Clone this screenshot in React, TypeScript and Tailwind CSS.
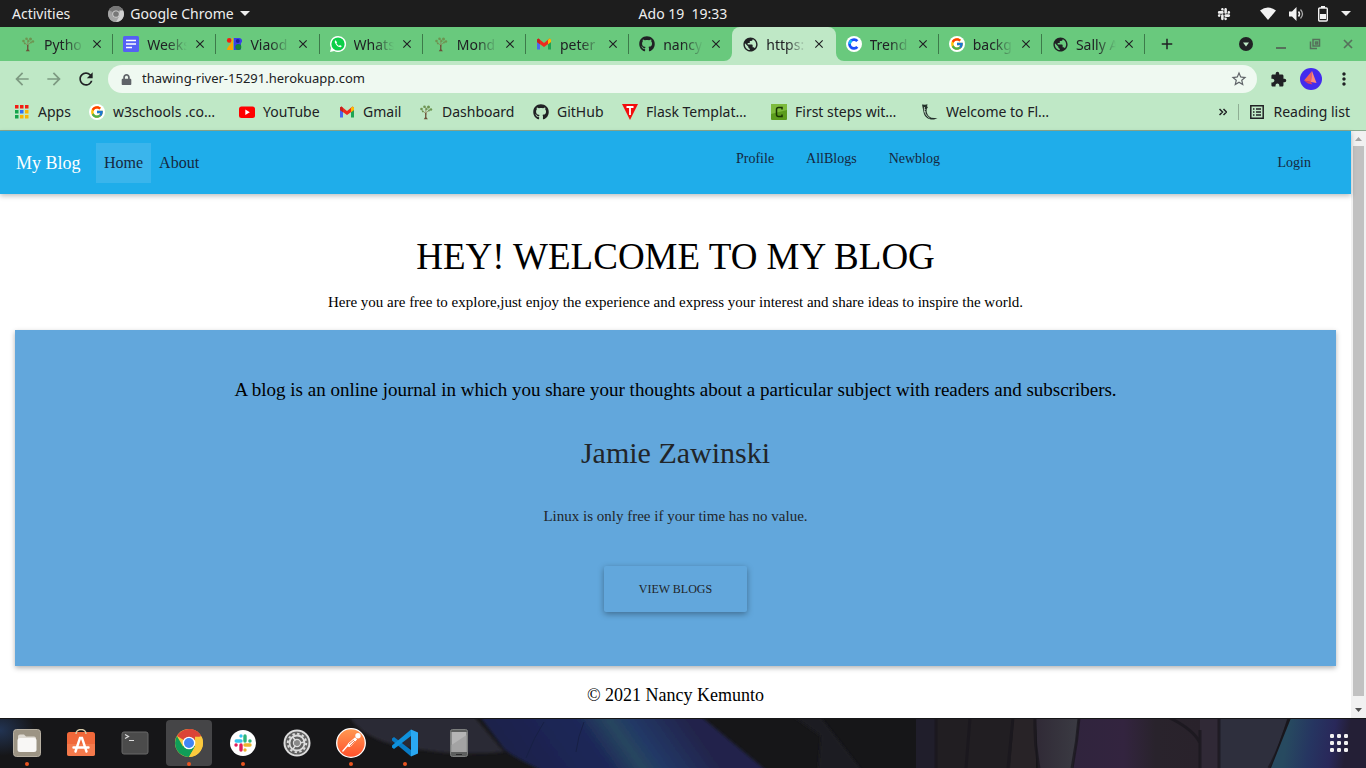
import React from "react";
import { FaGithub, FaSlack, FaLock } from "react-icons/fa";
import { FcGoogle } from "react-icons/fc";
import { MdClose, MdArrowBack, MdArrowForward, MdRefresh, MdStarBorder, MdMoreVert, MdPublic, MdAdd, MdExtension } from "react-icons/md";

const ui = "font-['Noto_Sans',sans-serif]";

function Tree() {
  return (
    <svg viewBox="0 0 16 16" className="size-4">
      <path d="M3.500 6l4 3.200 4.500-3.700M7.800 3v8" stroke="#8b7a55" strokeWidth=".7" fill="none" />
      <g fill="#6c9551">
        <circle cx="3.500" cy="5" r="1.300" /><circle cx="6.500" cy="2.800" r="1.300" /><circle cx="10.500" cy="3" r="1.500" />
        <circle cx="13" cy="5.500" r="1.200" /><circle cx="8.500" cy="5.200" r="1.100" /><circle cx="4.800" cy="7.400" r=".9" /><circle cx="11" cy="6.500" r=".9" />
      </g>
      <path d="M5.800 15.200l1.300-2V9h1.300v4.200l1.500 2z" fill="#6b5038" />
    </svg>
  );
}
function Doc() {
  return <svg viewBox="0 0 16 16" className="size-4"><rect width="16" height="16" rx="1.500" fill="#5560f5" /><path d="M3 4.500h10M3 8h10M3 11.500h6" stroke="#fff" strokeWidth="1.700" /></svg>;
}
function Viaod() {
  return (
    <svg viewBox="0 0 16 16" className="size-4">
      <circle cx="3.200" cy="4.400" r="2.300" fill="#f21b12" /><path d="M7 2v12H1c0-4 5-5 5-12z" fill="#f9a602" />
      <path d="M7.800 2H13a2.800 2.800 0 012 5v6a1.500 1.500 0 01-1.500 1H7.800z" fill="#3b3fe8" /><circle cx="12.300" cy="11" r="3" fill="#14823f" /><circle cx="11.800" cy="5" r="2" fill="#1c1f9e" />
    </svg>
  );
}
function Gmail() {
  return (
    <svg viewBox="0 0 16 16" className="size-4">
      <path d="M1 4v9.500h3V7z" fill="#4a68f0" /><path d="M12 7v6.500h3V4z" fill="#1fa553" />
      <path d="M1 3.500l1.500-1L8 7l5.500-4.500 1.500 1V6l-7 5-7-5z" fill="#ef2b1e" /><path d="M12 4l1.500-1.500 1.500 1V6l-3 2.200z" fill="#fbbc04" /><path d="M1 6V3.500l1.500-1L4 4v4.200z" fill="#c5221f" />
    </svg>
  );
}
function Globe() {
  return <MdPublic className="size-[17px] text-[#202124]" />;
}
function Google() {
  return <span className="grid size-4 place-items-center rounded-full bg-white"><FcGoogle className="size-3.5" /></span>;
}
function Clockify() {
  return <svg viewBox="0 0 16 16" className="size-4"><circle cx="8" cy="8" r="8" fill="#fff" /><path d="M11.300 5.200a4.400 4.400 0 100 5.600" stroke="#1b4dfa" strokeWidth="2.800" fill="none" /><path d="M3.600 8a4.400 4.400 0 012-3.700" stroke="#15b9f2" strokeWidth="2.800" fill="none" /></svg>;
}
function WhatsApp() {
  return <svg viewBox="0 0 16 16" className="size-4"><path d="M8 0a8 8 0 11-3.800 15L0 16l1.100-4A8 8 0 018 0z" fill="#fff" /><circle cx="8" cy="8" r="6.600" fill="#0ccf48" /><path d="M5.600 4.200c-.9.600-1 1.800-.5 2.700 1 2 2.200 3.300 4.200 4.200 1 .4 2.200 0 2.400-1.200L9.900 9l-.9.900C7.900 9.400 7 8.500 6.400 7.300l.7-.9z" fill="#fff" /></svg>;
}

const tabs = [
  { label: "Pytho", icon: <Tree /> },
  { label: "Weeks", icon: <Doc /> },
  { label: "Viaod", icon: <Viaod /> },
  { label: "Whats", icon: <WhatsApp /> },
  { label: "Mond", icon: <Tree /> },
  { label: "peter", icon: <Gmail /> },
  { label: "nancy", icon: <FaGithub className="size-4" /> },
  { label: "https:", icon: <Globe />, active: true },
  { label: "Trend", icon: <Clockify /> },
  { label: "backg", icon: <Google /> },
  { label: "Sally A", icon: <Globe /> },
];

function Apps() {
  const colors = ["#f21b12", "#f21b12", "#f21b12", "#14a34a", "#2f6df6", "#f9b402", "#14a34a", "#f9b402", "#f9b402"];
  return <svg viewBox="0 0 16 16" className="size-4">{colors.map((c, i) => <rect key={i} x={1 + (i % 3) * 5} y={1 + Math.floor(i / 3) * 5} width="3.500" height="3.500" fill={c} />)}</svg>;
}

const bookmarks = [
  { label: "Apps", icon: <Apps />, w: "w-[75px]" },
  { label: "w3schools .co…", icon: <Google />, w: "w-[150px]" },
  { label: "YouTube", icon: <svg viewBox="0 0 16 16" className="size-4"><rect y="2.500" width="16" height="11.500" rx="2.500" fill="#f00" /><path d="M6.300 5.500v5.500l4.500-2.800z" fill="#fff" /></svg>, w: "w-[100px]" },
  { label: "Gmail", icon: <Gmail />, w: "w-[79px]" },
  { label: "Dashboard", icon: <Tree />, w: "w-[115px]" },
  { label: "GitHub", icon: <FaGithub className="size-4" />, w: "w-[89px]" },
  { label: "Flask Templat…", icon: <svg viewBox="0 0 16 16" className="size-4"><path d="M0 0h16L8 16z" fill="#f20d0d" /><path d="M4.500 3h7M8 3v8" stroke="#fff" strokeWidth="1.800" /></svg>, w: "w-[149px]" },
  { label: "First steps wit…", icon: <svg viewBox="0 0 16 16" className="size-4"><rect width="16" height="16" rx="1" fill="#5a9b1c" /><path d="M0 0h16v6L0 10z" fill="#7dbb3c" /><path d="M11 5.500V3.500H7.500c-1.500 0-2 .6-2 2v5c0 1.400.5 2 2 2H11v-2" stroke="#193503" strokeWidth="1.500" fill="none" /></svg>, w: "w-[151px]" },
  { label: "Welcome to Fl…", icon: <svg viewBox="0 0 16 16" className="size-4"><path d="M0 .5l3 .3L5.500.2 5 2.500 6 3 4.800 5c-.8 3.500 1 7 4.500 8.800l6.200.4-3.500 1.300C6.500 16 2.300 13 1.500 8z" fill="#24332b" /><path d="M2.500 3c-.8 5 1.700 9 5 11M3.500 5.500l-1-.5M3.700 8l-1.200-.5" stroke="#d8efdc" strokeWidth=".8" fill="none" /></svg>, w: "w-[140px]" },
];

function ChromeIcon({ gray = false, className }: { gray?: boolean; className: string }) {
  return (
    <svg viewBox="0 0 28 28" className={className}>
      <circle cx="14" cy="14" r="14" fill={gray ? "#9a9a9a" : "#fbc93d"} />
      <path d="M14 14L1.900 7A14 14 0 0126.100 7z" fill={gray ? "#777" : "#db4437"} />
      <path d="M14 0A14 14 0 0126.100 7H14z" fill={gray ? "#777" : "#db4437"} />
      <path d="M1.900 7A14 14 0 0014 28l6.100-10.500L14 14 8 17.500z" fill={gray ? "#a4a4a4" : "#109d58"} />
      <path d="M14 28l6-10.500V7.700h6.500A14 14 0 0114 28z" fill={gray ? "#d0d0d0" : "#fbc93d"} />
      <circle cx="14" cy="14" r="6.300" fill={gray ? "#ddd" : "#fff"} /><circle cx="14" cy="14" r="5" fill={gray ? "#777" : "#4285f4"} />
    </svg>
  );
}

function SlackMark() {
  return (
    <svg viewBox="0 0 26 26" className="size-[26px]">
      <circle cx="13" cy="13" r="13" fill="#fff" />
      <g strokeWidth="3.400" strokeLinecap="round" fill="none">
        <path d="M11 6v.1M6.200 11H11" stroke="#36c5f0" /><path d="M15 6v5M20 11h-.1" stroke="#2eb67d" />
        <path d="M20 15h-5M15 20v-.1" stroke="#ecb22e" /><path d="M11 20v-5M6 15h.1" stroke="#e01e5a" />
      </g>
    </svg>
  );
}

const dock = [
  { name: "Files", running: true, icon: <svg viewBox="0 0 28 28" className="size-7"><rect x=".5" y=".5" width="27" height="27" rx="3" fill="#9c9484" stroke="#b7b0a2" /><path d="M5 7.500q0-2 2-2h4l2 2h8q2 0 2 2V12H5z" fill="#dedad2" /><rect x="4.500" y="9" width="19" height="14" rx="2.500" fill="#f8f7f5" /></svg> },
  { name: "Software", running: false, icon: <svg viewBox="0 0 28 28" className="size-7"><rect y="3" width="28" height="24" rx="2.500" fill="#f0683a" /><path d="M0 15h28v9.500a2.500 2.500 0 01-2.500 2.500h-23A2.500 2.500 0 010 24.500z" fill="#f47a4c" /><path d="M9 5c0-6 10-6 10 0" fill="none" stroke="#d8cba8" strokeWidth="1.500" /><path d="M8.500 22.500L13 9h2l4.500 13.500M6.500 18.500h15" stroke="#fff" strokeWidth="2.400" fill="none" strokeLinecap="round" /></svg> },
  { name: "Terminal", running: false, icon: <svg viewBox="0 0 28 28" className="size-7"><rect x="1" y="3" width="26" height="22" rx="2" fill="#4b4b4b" stroke="#686868" /><path d="M4 5.500l3.500 2L4 9.500M8 11.500h5" stroke="#ddd" strokeWidth="1.200" fill="none" /></svg> },
  { name: "Google Chrome", running: true, selected: true, icon: <ChromeIcon className="size-7" /> },
  { name: "Slack", running: true, icon: <SlackMark /> },
  { name: "Settings", running: false, icon: <svg viewBox="0 0 28 28" className="size-7"><circle cx="14" cy="14" r="13.500" fill="#dcdcdc" /><circle cx="14" cy="14" r="11.500" fill="#606060" /><circle cx="14" cy="14" r="7.500" fill="none" stroke="#dcdcdc" strokeWidth="1.800" /><circle cx="14" cy="14" r="9.200" fill="none" stroke="#dcdcdc" strokeWidth="2" strokeDasharray="2.400 2.400" /><circle cx="14" cy="14" r="3.600" fill="#888" stroke="#dcdcdc" strokeWidth="1.200" /><path d="M17 14l4-1M12.500 11.500L9.500 8M12.500 16.500L10 20" stroke="#dcdcdc" strokeWidth="1.500" /></svg> },
  { name: "Postman", running: true, icon: <svg viewBox="0 0 30 30" className="size-[30px]"><defs><linearGradient id="pm" x2="0" y2="1"><stop stopColor="#ff9a52" /><stop offset="1" stopColor="#ff4f2b" /></linearGradient></defs><circle cx="15" cy="15" r="14.300" fill="url(#pm)" stroke="#fff" strokeWidth="1.300" /><circle cx="22" cy="7.800" r="2.700" fill="#fff" /><path d="M19.500 10L12 17l-5.500 6.500M20.500 11L13 18.500" stroke="#fff" strokeWidth="1.300" fill="none" /><path d="M12 15.500l7-6 2 1.800-6 7-3.500.7z" fill="#fff" /><path d="M13 16l5-4M14 18l5-5" stroke="#f36b39" strokeWidth=".9" /></svg> },
  { name: "Visual Studio Code", running: true, icon: <svg viewBox="0 0 28 28" className="size-7"><path d="M1 9.500l2-1.600L20 21v6.500L1 11.500z" fill="#087bc5" /><path d="M1 18.500l2 1.600L20 7V.5L1 16.500z" fill="#0f91dc" /><path d="M20 .5l7 3v21l-7 3z" fill="#2aa8f2" /></svg> },
  { name: "Device", running: false, icon: <svg viewBox="0 0 28 28" className="size-7"><rect x="5.500" y=".5" width="17" height="27" rx="2" fill="#5d5f5e" stroke="#7c7e7d" /><rect x="6.500" y="3" width="15" height="20" fill="#b5b5b5" /><path d="M6.500 16L21.500 6v17h-15z" fill="#a3a3a3" /><path d="M11 25.500h6" stroke="#2b2b2b" /></svg> },
];

function Wallpaper() {
  return (
    <svg viewBox="0 0 1366 50" preserveAspectRatio="none" aria-hidden="true" className="absolute inset-0 size-full">
      <defs>
        <linearGradient id="beam" x1="530" y1="65" x2="665" y2="-30" gradientUnits="userSpaceOnUse">
          <stop stopColor="#1b204b" /><stop offset=".45" stopColor="#1d2858" /><stop offset=".61" stopColor="#27465f" /><stop offset=".72" stopColor="#223866" /><stop offset="1" stopColor="#20244b" />
        </linearGradient>
        <linearGradient id="edge" x1="1285" y1="30" x2="1345" y2="40" gradientUnits="userSpaceOnUse"><stop stopColor="#274a60" /><stop offset=".4" stopColor="#263561" /><stop offset=".75" stopColor="#29285a" /><stop offset="1" stopColor="#241f36" /></linearGradient>
        <linearGradient id="panel"><stop stopColor="#30243d" /><stop offset=".4" stopColor="#33243f" /><stop offset=".65" stopColor="#29232c" /><stop offset="1" stopColor="#29222b" /></linearGradient>
        <linearGradient id="pane"><stop stopColor="#302a36" /><stop offset="1" stopColor="#3b3b43" /></linearGradient>
        <radialGradient id="corner"><stop stopColor="#223453" /><stop offset="1" stopColor="#161618" /></radialGradient>
        <filter id="soft"><feGaussianBlur stdDeviation="1.500" /></filter>
      </defs>
      <rect width="1366" height="50" fill="#161618" />
      <ellipse cx="0" cy="12" rx="35" ry="26" fill="url(#corner)" />
      <g filter="url(#soft)">
        <path d="M348 -4h124l32 38q-46 4-80-2C385 28 358 16 348-4z" fill="#2c2935" />
        <path d="M478-4h220l70 58H545q-30-14-40-22z" fill="url(#beam)" />
        <path d="M700-4l70 58h-60z" fill="#161618" opacity="0" />
        <path d="M790-4h28l45 58h-45l3-36z" fill="#1d1d23" />
      </g>
      <path d="M544 4q-10 15-18 36M584 4q-6 14-8 30" stroke="#172045" fill="none" />
      <path d="M916 0h20v50h-20z" fill="#201e2b" />
      <path d="M936 0h78l-4 50h-74z" fill="#211e22" />
      <path d="M1014 0h22v50h-26z" fill="#282327" />
      <path d="M1036 0h43l-6 50h-35z" fill="url(#pane)" />
      <path d="M1079 0h121v50h-127z" fill="url(#panel)" />
      <path d="M1200 0h19v50h-19z" fill="#302936" />
      <path d="M1219 0h69l-18 50h-51z" fill="#2e2f3d" />
      <path d="M936 0v50M970 0l-4 50M1013 0l-5 50M1035 0q-1 25 4 50M1079 0q-2 25-7 50M1200 12v38M1219 0v50M1170 0q24 12 30 25M1289 0q-8 28-20 50" stroke="#19171d" strokeWidth="3" fill="none" opacity=".75" />
      <path d="M1291 0h75v50h-95z" fill="url(#edge)" />
      <rect width="1366" height="1" fill="#161618" />
    </svg>
  );
}

export default function App() {
  return (
    <div className={`flex min-h-screen flex-col bg-white text-[#202124] ${ui}`}>
      <header className="grid h-[27px] grid-cols-3 items-center bg-[#1d1d1d] text-[14px] text-[#eee]">
        <div className="flex items-center gap-[38px] pl-3">
          <button>Activities</button>
          <button className="flex items-center gap-[6px]">
            <ChromeIcon gray className="size-4" />Google Chrome
            <svg viewBox="0 0 10 5" className="h-[5px] w-[10px]"><path d="M0 0h10L5 5z" fill="#eee" /></svg>
          </button>
        </div>
        <time className="text-center whitespace-pre">Ado 19  19:33</time>
        <div className="flex items-center justify-end gap-[13px] pr-[15px]">
          <FaSlack className="mr-4 size-[14px]" />
          <svg viewBox="0 0 16 13" className="h-[13px] w-4"><path d="M0 3.500Q8-2.500 16 3.500L8 13z" fill="#f2f2f2" /></svg>
          <svg viewBox="0 0 16 14" className="h-[14px] w-4"><path d="M0 4.500h3L7.500 0v14L3 9.500H0z" fill="#f2f2f2" /><path d="M9.500 4.500q2 2.500 0 5" stroke="#f2f2f2" strokeWidth="1.500" fill="none" /><path d="M11.500 2.500q4 4.500 0 9" stroke="#aaa" strokeWidth="1.300" fill="none" /></svg>
          <svg viewBox="0 0 10 16" className="h-4 w-[10px]"><path d="M3 0h4v2H3z" fill="#f2f2f2" /><rect x=".7" y="2" width="8.600" height="13" rx="1" fill="none" stroke="#f2f2f2" strokeWidth="1.400" /><path d="M2 8h6v5H2z" fill="#f2f2f2" /></svg>
          <svg viewBox="0 0 10 5" className="h-[5px] w-[10px]"><path d="M0 0h10L5 5z" fill="#eee" /></svg>
        </div>
      </header>

      <nav aria-label="Tabs" className="flex h-[34px] items-center bg-[#69c97d] pl-[10px]">
        <div className="flex h-full max-w-[1135px] flex-1">
          {tabs.map((t, i) => (
            <div key={t.label} className={`relative flex min-w-0 flex-1 items-center pl-[10px] ${t.active ? "rounded-t-lg bg-[#bfe8c6]" : ""}`}>
              {t.active && (
                <>
                  <svg viewBox="0 0 8 8" className="absolute bottom-0 -left-2 size-2"><path d="M8 0v8H0a8 8 0 008-8z" fill="#bfe8c6" /></svg>
                  <svg viewBox="0 0 8 8" className="absolute -right-2 bottom-0 size-2"><path d="M0 0v8h8a8 8 0 01-8-8z" fill="#bfe8c6" /></svg>
                </>
              )}
              <span className="grid size-4 shrink-0 place-items-center">{t.icon}</span>
              <button className="ml-2 w-10 overflow-hidden text-left text-[14px] whitespace-nowrap [mask-image:linear-gradient(to_right,black_50%,transparent)]">{t.label}</button>
              <button aria-label={`Close ${t.label}`} className="ml-[6px]"><MdClose className="size-[14px]" /></button>
              {i !== 6 && !t.active && <span className="absolute top-[7px] right-0 h-5 w-px bg-[#3d7a4a]" />}
            </div>
          ))}
        </div>
        <button aria-label="New tab" className="ml-[13px]"><MdAdd className="size-[18px]" /></button>
        <div className="ml-auto flex items-center gap-[22px] pr-[13px] text-[#56705b]">
          <button aria-label="Search tabs"><svg viewBox="0 0 14 14" className="size-[14px]"><circle cx="7" cy="7" r="7" fill="#202124" /><path d="M4 5.500h6L7 9.500z" fill="#bfe8c6" /></svg></button>
          <button aria-label="Minimize"><svg viewBox="0 0 12 12" className="size-3"><path d="M1 10h10" stroke="currentColor" strokeWidth="2" /></svg></button>
          <button aria-label="Restore"><svg viewBox="0 0 12 12" className="size-3"><path d="M4 1.500h6.500V8H4zM1.500 3.500v7H8M6.500 4h2v2h-2z" fill="none" stroke="currentColor" strokeWidth="1.500" /></svg></button>
          <button aria-label="Close"><svg viewBox="0 0 10 10" className="size-[10px]"><path d="M1 1l8 8M9 1L1 9" stroke="currentColor" strokeWidth="1.700" /></svg></button>
        </div>
      </nav>

      <div className="flex h-9 items-center bg-[#bfe8c6] pr-3 pl-3">
        <button aria-label="Back" className="text-[#7d9a82]"><MdArrowBack className="size-5" /></button>
        <button aria-label="Forward" className="ml-3 text-[#7d9a82]"><MdArrowForward className="size-5" /></button>
        <button aria-label="Reload" className="ml-3"><MdRefresh className="size-5" /></button>
        <div className="ml-3 flex h-7 flex-1 items-center rounded-full bg-[#eff9f1] px-[13px]">
          <FaLock className="size-[11px] text-[#5f6368]" />
          <input aria-label="Address" defaultValue="thawing-river-15291.herokuapp.com" className="ml-[10px] min-w-0 flex-1 bg-transparent text-[13px] outline-none" />
          <button aria-label="Bookmark this page" className="-mr-1"><MdStarBorder className="size-[18px] text-[#5f6368]" /></button>
        </div>
        <button aria-label="Extensions" className="ml-[13px]"><MdExtension className="size-[17px]" /></button>
        <button aria-label="Profile" className="ml-[13px]"><svg viewBox="0 0 22 22" className="size-[22px]"><circle cx="11" cy="11" r="11" fill="#432bed" /><path d="M12 3L4 12.500l7 1.500z" fill="#f0645c" /><path d="M12 3l4.500 12-5.500-1z" fill="#ff8c78" /><path d="M4 12.500l7 1.500 1.500 2.500L8 15.500z" fill="#d94360" /></svg></button>
        <button aria-label="Menu" className="ml-3"><MdMoreVert className="size-5" /></button>
      </div>

      <nav aria-label="Bookmarks" className="flex h-[34px] items-center border-b border-[#8aa98f] bg-[#bfe8c6] pb-1 pl-[14px] text-[14px] whitespace-nowrap">
        {bookmarks.map((b) => (
          <a key={b.label} href="#" className={`flex shrink-0 items-center gap-2 ${b.w}`}>{b.icon}{b.label}</a>
        ))}
        <button aria-label="More bookmarks" className="ml-auto"><svg viewBox="0 0 8 8" className="size-2"><path d="M.5 1l3 3-3 3M4.500 1l3 3-3 3" fill="none" stroke="#202124" strokeWidth="1.500" /></svg></button>
        <button className="ml-[11px] flex items-center gap-2 border-l border-[#8fae94] pr-4 pl-[10px] leading-4">
          <svg viewBox="0 0 16 16" className="size-4"><path d="M1.800 1.800h12.400v12.400H1.800zM4 5h1.500M4 8h1.500M4 11h1.500M7 5h5M7 8h5M7 11h5" fill="none" stroke="#202124" strokeWidth="1.500" /></svg>Reading list
        </button>
      </nav>

      <div className="flex flex-1 font-['Liberation_Serif',serif] text-black">
        <main className="flex-1">
          <nav aria-label="Site" className="relative flex h-[63px] items-start bg-[#1fadea] px-4 pt-3 text-[16px] leading-10 text-[#152840] shadow-[0_2px_5px_rgba(0,0,0,0.25)]">
            <a href="#" className="w-20 text-[18px] whitespace-nowrap text-white">My Blog</a>
            <a href="#" className="bg-[#3ab5ec] px-2">Home</a>
            <a href="#" className="px-2">About</a>
            <div className="ml-auto flex w-[599px] gap-8 text-[14px] leading-8">
              <a href="#">Profile</a><a href="#">AllBlogs</a><a href="#">Newblog</a>
              <a href="#" className="mr-6 ml-auto leading-10">Login</a>
            </div>
          </nav>
          <section className="px-[15px] text-center">
            <h1 className="pt-9 text-[37px] leading-[54px]">HEY! WELCOME TO MY BLOG</h1>
            <p className="pt-[6px] text-[15px] leading-6">Here you are free to explore,just enjoy the experience and express your interest and share ideas to inspire the world.</p>
            <div className="mt-4 flex h-[336px] flex-col items-center bg-[#62a7dc] pt-12 text-[#212529] shadow-[0_2px_5px_rgba(0,0,0,0.3)]">
              <p className="text-[19px] leading-6 text-black">A blog is an online journal in which you share your thoughts about a particular subject with readers and subscribers.</p>
              <h2 className="mt-7 text-[30px] leading-[46px]">Jamie Zawinski</h2>
              <p className="mt-[28px] text-[15px] leading-6">Linux is only free if your time has no value.</p>
              <button className="mt-[38px] h-[46px] w-[143px] rounded-[2px] text-[12px] shadow-[0_2px_6px_rgba(0,0,0,0.35)]">VIEW BLOGS</button>
            </div>
          </section>
          <footer className="pt-4 text-center text-[18px] leading-[26px]">© 2021 Nancy Kemunto</footer>
        </main>
        <div aria-hidden="true" className="flex w-[15px] flex-col items-center bg-[#f1f1f1]">
          <svg viewBox="0 0 15 15" className="size-[15px]"><path d="M4 10h7L7.500 6z" fill="#a3a3a3" /></svg>
          <div className="w-[11px] flex-1 bg-[#c1c1c1]" />
          <svg viewBox="0 0 15 22" className="h-[22px] w-[15px]"><path d="M4 12h7l-3.500 4z" fill="#505050" /></svg>
        </div>
      </div>

      <nav aria-label="Dock" className="relative flex h-[50px] items-center overflow-hidden bg-[#161618]">
        <Wallpaper />
        <div className="relative flex h-full items-center gap-2 pl-1">
          {dock.map((d) => (
            <button key={d.name} aria-label={d.name} className={`relative grid h-[46px] w-[46px] place-items-center rounded ${d.selected ? "bg-[#454547]" : ""}`}>
              {d.icon}
              {d.running && <span className="absolute bottom-0 size-1 rounded-full bg-[#e95420]" />}
            </button>
          ))}
        </div>
        <button aria-label="Show applications" className="relative mr-[17px] ml-auto">
          <svg viewBox="0 0 20 20" className="size-5">{[0, 1, 2].flatMap((r) => [0, 1, 2].map((c) => <rect key={`${r}${c}`} x={1 + c * 7} y={1 + r * 7} width="4" height="4" rx="1.200" fill="#f2f2f2" />))}</svg>
        </button>
      </nav>
    </div>
  );
}
